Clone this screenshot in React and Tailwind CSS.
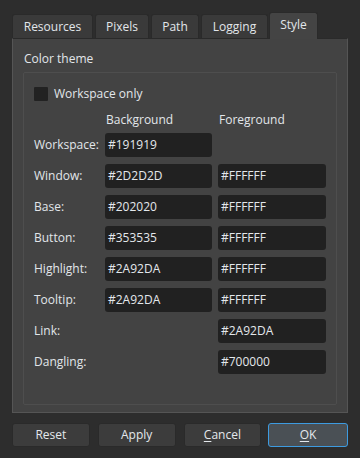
const tabs = [
  { label: 'Resources', w: 'w-[81px]', ml: '' },
  { label: 'Pixels', w: 'w-[54px]', ml: 'ml-[2px]' },
  { label: 'Path', w: 'w-[48px]', ml: 'ml-[2px]' },
  { label: 'Logging', w: 'w-[67px]', ml: 'ml-[2px]' },
]

const rows = [
  { label: 'Workspace:', bg: '#191919', fg: null },
  { label: 'Window:', bg: '#2D2D2D', fg: '#FFFFFF' },
  { label: 'Base:', bg: '#202020', fg: '#FFFFFF' },
  { label: 'Button:', bg: '#353535', fg: '#FFFFFF' },
  { label: 'Highlight:', bg: '#2A92DA', fg: '#FFFFFF' },
  { label: 'Tooltip:', bg: '#2A92DA', fg: '#FFFFFF' },
  { label: 'Link:', bg: null, fg: '#2A92DA' },
  { label: 'Dangling:', bg: null, fg: '#700000' },
]

function ColorField({ value }) {
  if (!value) return <div />
  return (
    <div className="h-[24px] rounded-[3px] bg-[#212121] flex items-center pl-[3px] text-[#e4e8ec]">
      {value}
    </div>
  )
}

function DialogButton({ children, primary }) {
  return (
    <button
      className={`h-[24px] rounded-[3px] border flex items-center justify-center text-[#e4e8ec] ${
        primary ? 'border-[#3d9be0] bg-[#4a5055] w-[80px] ml-[-1px]' : 'border-[#2a2a2a] bg-[#3c3c3c] w-[78px]'
      }`}
    >
      {children}
    </button>
  )
}

export default function App() {
  return (
    <div
      className="w-[360px] h-[458px] bg-[#2d2d2d] px-[12px] pt-[12px] text-[12px] text-[#e2e6ea] leading-[18px]"
      style={{ fontFamily: '"Open Sans", "Noto Sans", sans-serif' }}
    >
      {/* Tabs */}
      <div className="flex items-end h-[26px] relative z-10">
        {tabs.map((t) => (
          <div
            key={t.label}
            className={`${t.w} ${t.ml} h-[24px] rounded-t-[3px] border border-b-0 border-[#2a2a2a] bg-[#3a3a3a] flex items-center justify-center`}
          >
            {t.label}
          </div>
        ))}
        <div className="w-[49px] ml-px h-[27px] -mb-px rounded-t-[3px] border border-b-0 border-[#2a2a2a] bg-[#444444] flex items-center justify-center pb-[2px]">
          Style
        </div>
      </div>

      {/* Pane */}
      <div className="h-[375px] w-[336px] border border-[#555555] border-t-[#2a2a2a] bg-[#434343] px-[10px] pt-[11px]">
        <div className="pl-px">Color theme</div>
        <div className="mt-[4px] h-[333px] border border-[#4e4e4e] rounded-[2px] pl-[10px] pt-[13px]">
          <div className="flex items-center gap-[6px] h-[16px]">
            <div className="w-[14px] h-[14px] bg-[#222222] rounded-[1px]" />
            <span>Workspace only</span>
          </div>
          <div className="grid grid-cols-[65px_107px_108px] gap-x-[6px] gap-y-[7px] mt-[9px]">
            <div />
            <div className="pl-px -mb-[3px]">Background</div>
            <div className="pl-px -mb-[3px]">Foreground</div>
            {rows.map((r) => (
              <div key={r.label} className="contents">
                <div className="h-[24px] flex items-center">{r.label}</div>
                <ColorField value={r.bg} />
                <ColorField value={r.fg} />
              </div>
            ))}
          </div>
        </div>
      </div>

      {/* Buttons */}
      <div className="flex items-center mt-[10px] gap-[8px]">
        <DialogButton>Reset</DialogButton>
        <DialogButton>Apply</DialogButton>
        <DialogButton>
          <span><span className="underline underline-offset-2">C</span>ancel</span>
        </DialogButton>
        <DialogButton primary>
          <span><span className="underline underline-offset-2">O</span>K</span>
        </DialogButton>
      </div>
    </div>
  )
}
